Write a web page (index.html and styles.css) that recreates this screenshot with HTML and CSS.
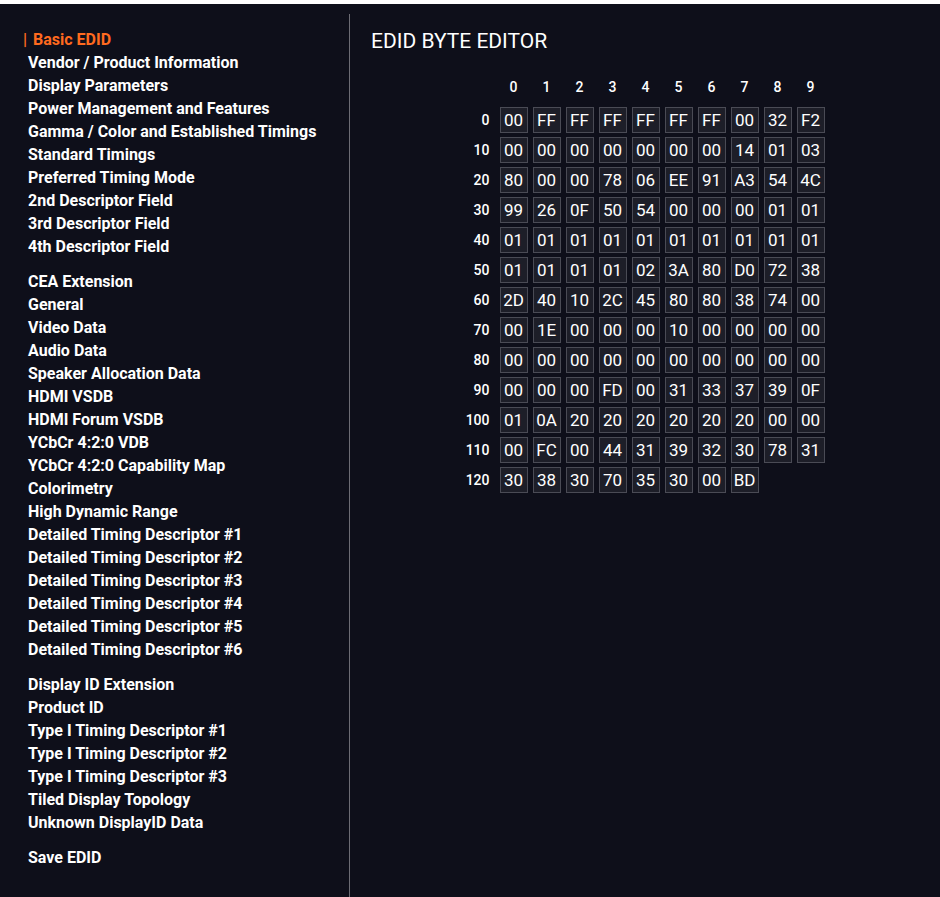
FILE: index.html
```html
<!DOCTYPE html>
<html lang="en">
<head>
	<meta charset="utf-8" />
	<title>EDID Editor</title>
	<link rel="stylesheet" href="styles.css">
</head>
<body>
	<div class="app">
		<nav class="sidebar">
			<ul class="nav-group">
				<li class="active">Basic EDID</li>
				<li>Vendor / Product Information</li>
				<li>Display Parameters</li>
				<li>Power Management and Features</li>
				<li>Gamma / Color and Established Timings</li>
				<li>Standard Timings</li>
				<li>Preferred Timing Mode</li>
				<li>2nd Descriptor Field</li>
				<li>3rd Descriptor Field</li>
				<li>4th Descriptor Field</li>
			</ul>
			<ul class="nav-group">
				<li>CEA Extension</li>
				<li>General</li>
				<li>Video Data</li>
				<li>Audio Data</li>
				<li>Speaker Allocation Data</li>
				<li>HDMI VSDB</li>
				<li>HDMI Forum VSDB</li>
				<li>YCbCr 4:2:0 VDB</li>
				<li>YCbCr 4:2:0 Capability Map</li>
				<li>Colorimetry</li>
				<li>High Dynamic Range</li>
				<li>Detailed Timing Descriptor #1</li>
				<li>Detailed Timing Descriptor #2</li>
				<li>Detailed Timing Descriptor #3</li>
				<li>Detailed Timing Descriptor #4</li>
				<li>Detailed Timing Descriptor #5</li>
				<li>Detailed Timing Descriptor #6</li>
			</ul>
			<ul class="nav-group">
				<li>Display ID Extension</li>
				<li>Product ID</li>
				<li>Type I Timing Descriptor #1</li>
				<li>Type I Timing Descriptor #2</li>
				<li>Type I Timing Descriptor #3</li>
				<li>Tiled Display Topology</li>
				<li>Unknown DisplayID Data</li>
			</ul>
			<ul class="nav-group">
				<li>Save EDID</li>
			</ul>
		</nav>

		<main class="editor">
			<h1>EDID BYTE EDITOR</h1>
			<div class="byte-grid">
				<span class="col-head"></span>
				<span class="col-head">0</span><span class="col-head">1</span><span class="col-head">2</span><span class="col-head">3</span><span class="col-head">4</span>
				<span class="col-head">5</span><span class="col-head">6</span><span class="col-head">7</span><span class="col-head">8</span><span class="col-head">9</span>

				<span class="row-head">0</span>
				<span class="byte">00</span><span class="byte">FF</span><span class="byte">FF</span><span class="byte">FF</span><span class="byte">FF</span>
				<span class="byte">FF</span><span class="byte">FF</span><span class="byte">00</span><span class="byte">32</span><span class="byte">F2</span>

				<span class="row-head">10</span>
				<span class="byte">00</span><span class="byte">00</span><span class="byte">00</span><span class="byte">00</span><span class="byte">00</span>
				<span class="byte">00</span><span class="byte">00</span><span class="byte">14</span><span class="byte">01</span><span class="byte">03</span>

				<span class="row-head">20</span>
				<span class="byte">80</span><span class="byte">00</span><span class="byte">00</span><span class="byte">78</span><span class="byte">06</span>
				<span class="byte">EE</span><span class="byte">91</span><span class="byte">A3</span><span class="byte">54</span><span class="byte">4C</span>

				<span class="row-head">30</span>
				<span class="byte">99</span><span class="byte">26</span><span class="byte">0F</span><span class="byte">50</span><span class="byte">54</span>
				<span class="byte">00</span><span class="byte">00</span><span class="byte">00</span><span class="byte">01</span><span class="byte">01</span>

				<span class="row-head">40</span>
				<span class="byte">01</span><span class="byte">01</span><span class="byte">01</span><span class="byte">01</span><span class="byte">01</span>
				<span class="byte">01</span><span class="byte">01</span><span class="byte">01</span><span class="byte">01</span><span class="byte">01</span>

				<span class="row-head">50</span>
				<span class="byte">01</span><span class="byte">01</span><span class="byte">01</span><span class="byte">01</span><span class="byte">02</span>
				<span class="byte">3A</span><span class="byte">80</span><span class="byte">D0</span><span class="byte">72</span><span class="byte">38</span>

				<span class="row-head">60</span>
				<span class="byte">2D</span><span class="byte">40</span><span class="byte">10</span><span class="byte">2C</span><span class="byte">45</span>
				<span class="byte">80</span><span class="byte">80</span><span class="byte">38</span><span class="byte">74</span><span class="byte">00</span>

				<span class="row-head">70</span>
				<span class="byte">00</span><span class="byte">1E</span><span class="byte">00</span><span class="byte">00</span><span class="byte">00</span>
				<span class="byte">10</span><span class="byte">00</span><span class="byte">00</span><span class="byte">00</span><span class="byte">00</span>

				<span class="row-head">80</span>
				<span class="byte">00</span><span class="byte">00</span><span class="byte">00</span><span class="byte">00</span><span class="byte">00</span>
				<span class="byte">00</span><span class="byte">00</span><span class="byte">00</span><span class="byte">00</span><span class="byte">00</span>

				<span class="row-head">90</span>
				<span class="byte">00</span><span class="byte">00</span><span class="byte">00</span><span class="byte">FD</span><span class="byte">00</span>
				<span class="byte">31</span><span class="byte">33</span><span class="byte">37</span><span class="byte">39</span><span class="byte">0F</span>

				<span class="row-head">100</span>
				<span class="byte">01</span><span class="byte">0A</span><span class="byte">20</span><span class="byte">20</span><span class="byte">20</span>
				<span class="byte">20</span><span class="byte">20</span><span class="byte">20</span><span class="byte">00</span><span class="byte">00</span>

				<span class="row-head">110</span>
				<span class="byte">00</span><span class="byte">FC</span><span class="byte">00</span><span class="byte">44</span><span class="byte">31</span>
				<span class="byte">39</span><span class="byte">32</span><span class="byte">30</span><span class="byte">78</span><span class="byte">31</span>

				<span class="row-head">120</span>
				<span class="byte">30</span><span class="byte">38</span><span class="byte">30</span><span class="byte">70</span><span class="byte">35</span>
				<span class="byte">30</span><span class="byte">00</span><span class="byte">BD</span>
			</div>
		</main>
	</div>
</body>
</html>
```

FILE: styles.css
```css
html, body {
	margin: 0;
	background: #fff;
}
body {
	font-family: Roboto, 'Liberation Sans', sans-serif;
	color: #fff;
}
.app {
	display: flex;
	margin-top: 4px;
	min-height: 893px;
	background: #0e0f1a;
}

/* left navigation */
.sidebar {
	width: 350px;
	box-sizing: border-box;
	margin-top: 10px;
	padding: 14px 0 0 28px;
	border-right: 1px solid #6c6c74;
}
.nav-group {
	list-style: none;
	margin: 0 0 12px;
	padding: 0;
}
.nav-group li {
	font-size: 16px;
	font-weight: bold;
	line-height: 23px;
	cursor: pointer;
}
.nav-group li.active {
	margin-left: -5px;
	color: #ff6a1f;
}
.nav-group li.active::before {
	content: "|";
	margin-right: 6px;
}

/* byte editor */
.editor {
	flex: 1;
	margin-top: 10px;
	padding: 15px 0 0 21px;
}
.editor h1 {
	margin: 0 0 18px;
	font-size: 21px;
	font-weight: normal;
	line-height: 24px;
}
.byte-grid {
	display: grid;
	grid-template-columns: 32px repeat(10, 28px);
	grid-template-rows: 32px;
	grid-auto-rows: 26px;
	column-gap: 5px;
	row-gap: 4px;
	justify-content: center;
	margin-left: -24px;
}
.col-head,
.row-head {
	display: flex;
	align-items: center;
	font-size: 14px;
	font-weight: 500;
}
.col-head {
	justify-content: center;
}
.row-head {
	justify-content: flex-end;
	padding-right: 5px;
}
.byte {
	display: flex;
	align-items: center;
	justify-content: center;
	background: #1d1e28;
	border: 1px solid #4a4b55;
	font-size: 17px;
}
```
